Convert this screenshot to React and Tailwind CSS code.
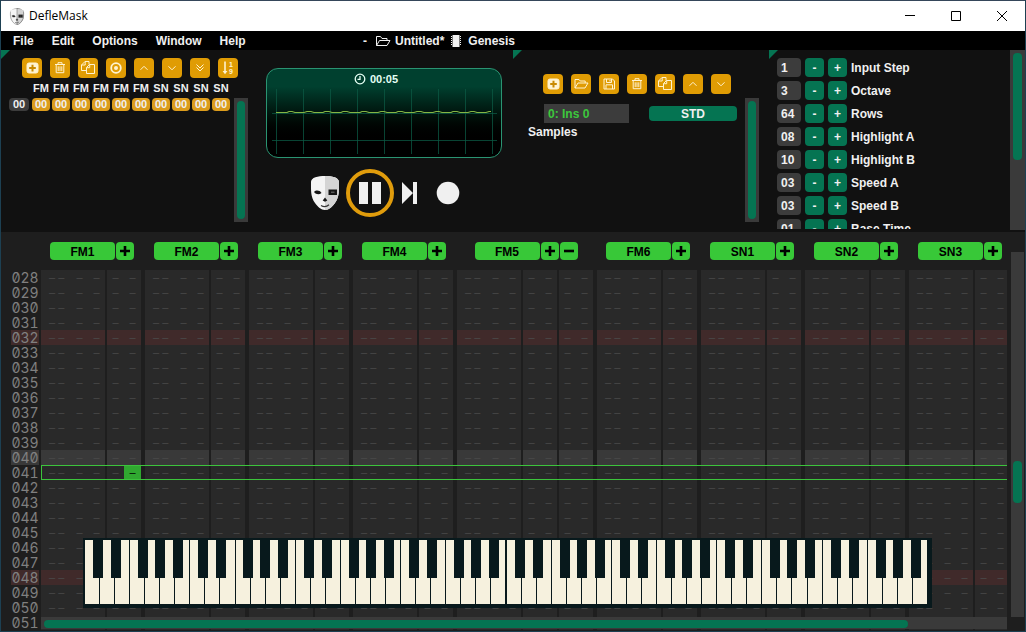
import React, { useState } from 'react';
import clsx from 'clsx';

const menus = ['File', 'Edit', 'Options', 'Window', 'Help'];

const matrixChannels = ['FM', 'FM', 'FM', 'FM', 'FM', 'FM', 'SN', 'SN', 'SN', 'SN'];

const channels = [
  { name: 'FM1', effects: 1 },
  { name: 'FM2', effects: 1 },
  { name: 'FM3', effects: 1 },
  { name: 'FM4', effects: 1 },
  { name: 'FM5', effects: 2 },
  { name: 'FM6', effects: 1 },
  { name: 'SN1', effects: 1 },
  { name: 'SN2', effects: 1 },
  { name: 'SN3', effects: 1 }
];

const initialSettings = [
  { id: 'step', label: 'Input Step', value: '1' },
  { id: 'octave', label: 'Octave', value: '3' },
  { id: 'rows', label: 'Rows', value: '64' },
  { id: 'hl-a', label: 'Highlight A', value: '08' },
  { id: 'hl-b', label: 'Highlight B', value: '10' },
  { id: 'speed-a', label: 'Speed A', value: '03' },
  { id: 'speed-b', label: 'Speed B', value: '03' },
  { id: 'base', label: 'Base Time', value: '01' }
];

const FIRST_ROW = 28;
const LAST_ROW = 51;
const CURSOR_ROW = 41;

const rows = Array.from({ length: LAST_ROW - FIRST_ROW + 1 }, (_, i) => FIRST_ROW + i);

const icons = {
  add: (
    <>
      <rect x="5" y="5" width="11" height="10" rx="2" fill="currentColor" />
      <path d="M10.5 6.8v6.6M7.2 10.1h6.6" stroke="#c98a00" strokeWidth="2" />
    </>
  ),
  trash: (
    <path d="M5 6.5h10M8 6.5V4.7h4v1.8M6.2 6.5v8.2h7.6V6.5M8.2 8.3v4.8M10 8.3v4.8M11.8 8.3v4.8" />
  ),
  copy: (
    <>
      <path d="M8.5 12.5h-5V7L7 3.5h4v3M7.2 3.5V7H3.5" />
      <path d="M11.5 6.5h5v9h-8v-6zM11.7 6.5v3.2H8.5" />
    </>
  ),
  target: (
    <>
      <circle cx="10" cy="10" r="4.8" strokeWidth="1.800" />
      <circle cx="10" cy="10" r="2" fill="currentColor" stroke="none" />
    </>
  ),
  up: <path d="M6.5 11.8L10 8.3l3.5 3.5" />,
  down: <path d="M6.5 8.3l3.5 3.5 3.5-3.5" />,
  doubleDown: <path d="M6.5 6.5L10 10l3.5-3.5M6.5 9.5L10 13l3.5-3.5" />,
  order: (
    <>
      <path d="M7 3.5v11" strokeWidth="1.6" />
      <path d="M4.6 13L7 16.3 9.4 13z" fill="currentColor" stroke="none" />
      <text x="11" y="9" fontSize="7" fontWeight="bold" fill="currentColor" stroke="none">1</text>
      <text x="11" y="16" fontSize="7" fontWeight="bold" fill="currentColor" stroke="none">9</text>
    </>
  ),
  open: <path d="M4 14V5.5h4l1.2 1.5h5v2M4 14l3-5h10l-3 5z" />,
  save: (
    <path d="M5 5h8.5L15.5 7v8H5zM7.5 5v3.5h5V5M11 6v1.5M7 15v-4.2h6.5V15" />
  )
};

const ToolButton = ({ icon, label }) => (
  <button aria-label={label} className="h-5 w-5 shrink-0 rounded bg-[#e09c04] text-[#fff3d0] hover:bg-[#f0ac14]">
    <svg viewBox="0 0 20 20" className="h-5 w-5" fill="none" stroke="currentColor" strokeWidth="1">
      {icons[icon]}
    </svg>
  </button>
);

const Panel = ({ className, children }) => (
  <section className={clsx('relative h-full overflow-hidden', className)}>
    <svg viewBox="0 0 9 9" className="absolute top-0 left-0 h-[9px] w-[9px]">
      <path d="M0 0h9L0 9z" fill="#057452" />
    </svg>
    {children}
  </section>
);

const Mask = ({ className }) => (
  <svg viewBox="0 0 30 36" className={className}>
    <path d="M15 1C22 1 29 2.500 29 7c0 8 .5 15-4 21-3 4-6 7-10 7s-7-3-10-7C.5 22 1 15 1 7 1 2.500 8 1 15 1z" fill="#f4f4f4" />
    <path d="M15 1C22 1 29 2.500 29 7c0 8 .5 15-4 21-3 4-6 7-10 7z" fill="#d4d4d4" />
    <path d="M4 17c2-2 5.500-2 7.500 1-2.500 2-5.500 1.500-7.500-1z" fill="#161616" />
    <path d="M18.500 14.500h8.500v5.500h-8.500z" fill="#161616" />
    <path d="M21 17.200h3.500" stroke="#777" strokeWidth="1" />
    <path d="M15 22.500l2.300 3-2.300 1.200-2.300-1.200z" fill="#161616" />
    <path d="M11 30.500c2.500 1.500 5.500 1.500 8-.8" fill="none" stroke="#333" strokeWidth="1.200" />
  </svg>
);

const TitleBar = () => (
  <header className="flex h-[31px] shrink-0 items-center border-t border-[#35465a] bg-white text-black">
    <Mask className="ml-2 h-[17px] w-4 rounded-lg stroke-[#555] stroke-1" />
    <span className="ml-1 font-['Open_Sans',sans-serif] text-xs font-normal">DefleMask</span>
    <div className="ml-auto flex h-full">
      <button aria-label="Minimize" className="flex w-[46px] items-center justify-center">
        <svg viewBox="0 0 12 12" className="h-3 w-3" stroke="#000"><path d="M1 5.500h10" /></svg>
      </button>
      <button aria-label="Maximize" className="flex w-[46px] items-center justify-center">
        <svg viewBox="0 0 12 12" className="h-3 w-3" fill="none" stroke="#000"><path d="M1.500 1.500h9v9h-9z" /></svg>
      </button>
      <button aria-label="Close" className="flex w-[46px] items-center justify-center">
        <svg viewBox="0 0 12 12" className="h-3 w-3" stroke="#000"><path d="M1 1l10 10M11 1L1 11" /></svg>
      </button>
    </div>
  </header>
);

const MenuBar = () => (
  <div className="flex h-[19px] shrink-0 items-center bg-black text-[#f0f0f0]">
    <nav className="flex w-[362px] gap-[18px] pl-3">
      {menus.map((m) => (
        <button key={m}>{m}</button>
      ))}
    </nav>
    <div className="flex items-center">
      <span>-</span>
      <svg viewBox="0 0 16 12" className="ml-2 h-3 w-4" fill="none" stroke="currentColor">
        <path d="M1.500 10.500v-9h4l1.500 2h5v2M1.500 10.500l3-5h10.500l-3 5z" />
      </svg>
      <span className="ml-1">Untitled*</span>
      <svg viewBox="0 0 12 12" className="mx-1.5 h-3 w-3">
        <path d="M2.500 0h7v12h-7z" fill="#f0f0f0" />
        <path d="M1.500 1v10M10.500 1v10" stroke="#f0f0f0" strokeDasharray="1 1" />
      </svg>
      <span>Genesis</span>
    </div>
  </div>
);

const PatternMatrix = () => (
  <Panel className="flex">
    <div className="min-w-0 flex-1 pt-2">
      <div className="flex gap-2 pl-[21px]">
        <ToolButton icon="add" label="Add pattern" />
        <ToolButton icon="trash" label="Remove pattern" />
        <ToolButton icon="copy" label="Clone pattern" />
        <ToolButton icon="target" label="Edit mode" />
        <ToolButton icon="up" label="Move up" />
        <ToolButton icon="down" label="Move down" />
        <ToolButton icon="doubleDown" label="Move to bottom" />
        <ToolButton icon="order" label="Renumber" />
      </div>
      <table className="ml-2 border-separate border-spacing-0 text-center text-[11px]">
        <thead>
          <tr>
            <td className="w-[23px] p-0"></td>
            {matrixChannels.map((c, i) => (
              <th key={i} className="h-5 w-5 p-0 pr-0.5">{c}</th>
            ))}
          </tr>
        </thead>
        <tbody className="leading-[13px]">
          <tr>
            <th className="p-0 align-top">
              <span className="block w-5 rounded bg-[#3c3c3c]">00</span>
            </th>
            {matrixChannels.map((c, i) => (
              <td key={i} className="p-0 align-top">
                <button className="block w-[18px] rounded bg-[#dc9c1c]">00</button>
              </td>
            ))}
          </tr>
        </tbody>
      </table>
    </div>
    <div className="mt-12 mr-[9px] h-[124px] w-3.5 shrink-0 bg-[#3a3a3a] p-[3px]">
      <div className="h-full rounded bg-[#057452]"></div>
    </div>
  </Panel>
);

const Transport = () => (
  <section className="pr-[11px] pl-[9px] pt-[18px]">
    <div className="relative h-[90px] overflow-hidden rounded-xl border border-[#2a9472] bg-linear-to-b from-[#00402f] from-20% to-black to-85%">
      <svg viewBox="0 0 234 88" preserveAspectRatio="none" className="absolute inset-0 h-full w-full" fill="none">
        <path
          d="M9.500 20v65M36.500 20v65M63.500 20v65M90.500 20v65M117.500 20v65M144.500 20v65M171.500 20v65M198.500 20v65M225.500 20v65M5 44.500h225M5 71.500h225"
          stroke="#0b5a44"
          strokeOpacity=".75"
        />
        <path
          d="M9 43.500h11l2-1h3l3 1h9l3-1h4l3 1h9l2-1h4l3 1h9l2-1h4l3 1h10l2-1h4l3 1h9l3-1h3l3 1h9l2-1h4l3 1h9l3-1h4l3 1h9l3-1h3l3 1h9l2-1h4l3 1h8l3-1h3l3 1h9l3-1h2"
          stroke="#84b544"
          strokeWidth="1.200"
        />
      </svg>
      <div className="relative flex items-center justify-center gap-1 pt-0.5 pr-4 text-[11px] leading-4 text-[#e4fff4]">
        <svg viewBox="0 0 12 12" className="h-3 w-3" fill="none" stroke="currentColor" strokeWidth="1.300">
          <circle cx="6" cy="6" r="4.800" />
          <path d="M6 3v3.300H3.500" />
        </svg>
        <span>00:05</span>
      </div>
    </div>
    <div className="mt-[11px] flex items-center pl-11 text-[#f0f0f0]">
      <button aria-label="About"><Mask className="h-9 w-[30px]" /></button>
      <button aria-label="Pause" className="ml-1.5 h-12 w-12">
        <svg viewBox="0 0 48 48" className="h-12 w-12">
          <circle cx="24" cy="24" r="22" fill="none" stroke="#e09c0c" strokeWidth="4" />
          <path d="M13 13h9v22h-9zM26 13h9v22h-9z" fill="currentColor" />
        </svg>
      </button>
      <button aria-label="Play next" className="ml-2">
        <svg viewBox="0 0 16 24" className="h-6 w-4" fill="currentColor">
          <path d="M0 1l11 11L0 23zM11 1h4v22h-4z" />
        </svg>
      </button>
      <button aria-label="Record" className="ml-[18px] h-6 w-6">
        <svg viewBox="0 0 24 24" className="h-6 w-6" fill="currentColor"><circle cx="12" cy="12" r="11.300" /></svg>
      </button>
    </div>
  </section>
);

const Instruments = () => {
  const [name, setName] = useState('0: Ins 0');

  return (
    <Panel className="flex">
      <div className="flex-1 pt-6">
        <div className="flex gap-2 pl-[30px]">
          <ToolButton icon="add" label="Add instrument" />
          <ToolButton icon="open" label="Load instrument" />
          <ToolButton icon="save" label="Save instrument" />
          <ToolButton icon="trash" label="Delete instrument" />
          <ToolButton icon="copy" label="Clone instrument" />
          <ToolButton icon="up" label="Instrument up" />
          <ToolButton icon="down" label="Instrument down" />
        </div>
        <div className="mt-2.5 flex items-center gap-5 pr-2 pl-[31px]">
          <input
            aria-label="Instrument name"
            value={name}
            onChange={(e) => setName(e.target.value)}
            className="h-[19px] w-[85px] bg-[#3c3c3c] px-1 text-[#3cc83c] outline-none"
          />
          <button className="h-[15px] flex-1 rounded bg-[#057452] leading-4">STD</button>
        </div>
        <h2 className="pl-[15px] leading-[18px]">Samples</h2>
      </div>
      <div className="mt-12 mr-[10px] h-[124px] w-3.5 shrink-0 bg-[#3a3a3a] p-[3px]">
        <div className="h-full rounded bg-[#057452]"></div>
      </div>
    </Panel>
  );
};

const Settings = () => {
  const [settings, setSettings] = useState(initialSettings);

  const change = (id, value) => {
    setSettings(settings.map((s) => (s.id === id ? { ...s, value } : s)));
  };

  const bump = (s, delta) => {
    const next = Math.max(0, Number(s.value) + delta);
    change(s.id, String(next).padStart(s.value.length, '0'));
  };

  return (
    <Panel className="flex">
      <div className="mb-[3px] flex flex-1 flex-col gap-1 overflow-hidden pt-2 pl-2">
        {settings.map((s) => (
          <div key={s.id} className="flex shrink-0 items-center gap-1">
            <input
              id={s.id}
              value={s.value}
              onChange={(e) => change(s.id, e.target.value)}
              className="h-[19px] w-6 rounded bg-[#3c3c3c] pl-1 outline-none"
            />
            <button aria-label={`Decrease ${s.label}`} onClick={() => bump(s, -1)} className="h-[19px] w-[19px] rounded bg-[#057452] leading-5">-</button>
            <button aria-label={`Increase ${s.label}`} onClick={() => bump(s, 1)} className="h-[19px] w-[19px] rounded bg-[#057452] leading-5">+</button>
            <label htmlFor={s.id}>{s.label}</label>
          </div>
        ))}
      </div>
      <div className="mb-0.5 w-[15px] bg-[#3a3a3a] p-[3px]">
        <div className="h-[107px] rounded bg-[#057452]"></div>
      </div>
    </Panel>
  );
};

const rowColor = (n) => {
  if (n % 16 === 0) return 'bg-[#402a2a]';
  if (n % 8 === 0) return 'bg-[#393939]';
  return 'bg-[#292929]';
};

const ChannelCells = ({ channel, row, cursor }) => (
  <>
    <td className="p-0">
      <div className={clsx('mr-0.5 flex w-16', rowColor(row))}>
        <span className="flex w-[30px] gap-[3px] pl-2">
          <span>–</span>
          <span>–</span>
        </span>
        <span className="w-[17px] text-center">–</span>
        <span className="w-[17px] text-center">–</span>
      </div>
    </td>
    {Array.from({ length: channel.effects }, (_, i) => (
      <td key={i} className="p-0">
        <div className={clsx('flex w-[34px]', rowColor(row), i === channel.effects - 1 ? 'mr-1' : 'mr-0.5')}>
          <span className="w-[17px] text-center">–</span>
          <span className={clsx('w-[17px] text-center', cursor && 'bg-[#30a830] text-black')}>–</span>
        </div>
      </td>
    ))}
  </>
);

const PatternEditor = () => (
  <main className="flex min-h-0 flex-1 gap-1 bg-[#1e1e1e] pr-px">
    <div className="relative flex-1 overflow-hidden">
      <table className="w-max border-separate border-spacing-0">
        <thead>
          <tr>
            <td className="h-[38px] w-10 p-0"></td>
            {channels.map((c) => (
              <th key={c.name} colSpan={c.effects + 1} className="p-0 pr-0.5">
                <div className="flex justify-center gap-px text-black">
                  <button className="h-[18px] w-[65px] rounded bg-[#38c838] leading-5">{c.name}</button>
                  <button aria-label={`Add effect column to ${c.name}`} className="h-[18px] w-[18px] rounded bg-[#38c838]">
                    <svg viewBox="0 0 18 18" stroke="currentColor" strokeWidth="2.600"><path d="M4 9h10M9 4v10" /></svg>
                  </button>
                  {c.effects > 1 && (
                    <button aria-label={`Remove effect column from ${c.name}`} className="h-[18px] w-[18px] rounded bg-[#38c838]">
                      <svg viewBox="0 0 18 18" stroke="currentColor" strokeWidth="2.600"><path d="M4 9h10" /></svg>
                    </button>
                  )}
                </div>
              </th>
            ))}
          </tr>
        </thead>
        <tbody className="text-[11px] leading-[15px] font-normal text-[#4a4a4a]">
          {rows.map((n) => (
            <tr key={n}>
              <th className="relative p-0 font-['Inter',sans-serif] text-sm font-normal text-[#808080] tabular-nums slashed-zero">
                <div className={clsx('ml-[10px] w-7 text-center leading-[15px]', n % 8 === 0 && rowColor(n))}>{String(n).padStart(3, '0')}</div>
                {n === CURSOR_ROW && (
                  <div className="pointer-events-none absolute top-0 left-full z-10 h-[15px] w-screen border border-[#3cc43c]"></div>
                )}
              </th>
              {channels.map((c) => (
                <ChannelCells key={c.name} channel={c} row={n} cursor={n === CURSOR_ROW && c.name === 'FM1'} />
              ))}
            </tr>
          ))}
        </tbody>
      </table>
      <Keyboard />
      <div className="absolute right-0 bottom-[2px] left-10 h-3 bg-[#3a3a3a] px-[3px] pt-[3px]">
        <div className="h-2 w-[90%] rounded bg-[#057452]"></div>
      </div>
    </div>
    <div className="mt-5 mb-3.5 flex w-[13px] flex-col bg-[#3a3a3a] px-0.5">
      <div className="mt-[209px] h-[42px] rounded bg-[#057452]"></div>
    </div>
  </main>
);

// one octave = seven white keys with the five black ones laid over them
const blackKeys = ['left-2', 'left-[26px]', 'left-[53px]', 'left-[70px]', 'left-[88px]'];

const Keyboard = () => (
  <div className="absolute bottom-[23px] left-[82px] flex h-[70px] w-[849px] border-t-2 border-r-4 border-b-4 border-l-2 border-[#08191c] bg-[#08191c]">
    {Array.from({ length: 8 }, (_, octave) => (
      <div key={octave} className="relative flex flex-1 gap-px pr-px">
        {['C', 'D', 'E', 'F', 'G', 'A', 'B'].map((note) => (
          <button key={note} aria-label={`${note}${octave}`} className="flex-1 bg-[#f6f1de]"></button>
        ))}
        {blackKeys.map((left, i) => (
          <button key={left} aria-label={`Sharp ${i + 1} octave ${octave}`} className={clsx('absolute top-0 h-[38px] w-[10px] bg-[#08191c]', left)}></button>
        ))}
      </div>
    ))}
  </div>
);

const App = () => {
  return (
    <div className="flex h-screen flex-col overflow-hidden border-x border-b border-[#1d4052] bg-[#111] font-['Liberation_Sans',Arial,sans-serif] text-xs font-bold text-[#f0f0f0]">
      <TitleBar />
      <MenuBar />
      <div className="grid h-[182px] shrink-0 grid-cols-4">
        <PatternMatrix />
        <Transport />
        <Instruments />
        <Settings />
      </div>
      <PatternEditor />
    </div>
  );
};

export default App;
